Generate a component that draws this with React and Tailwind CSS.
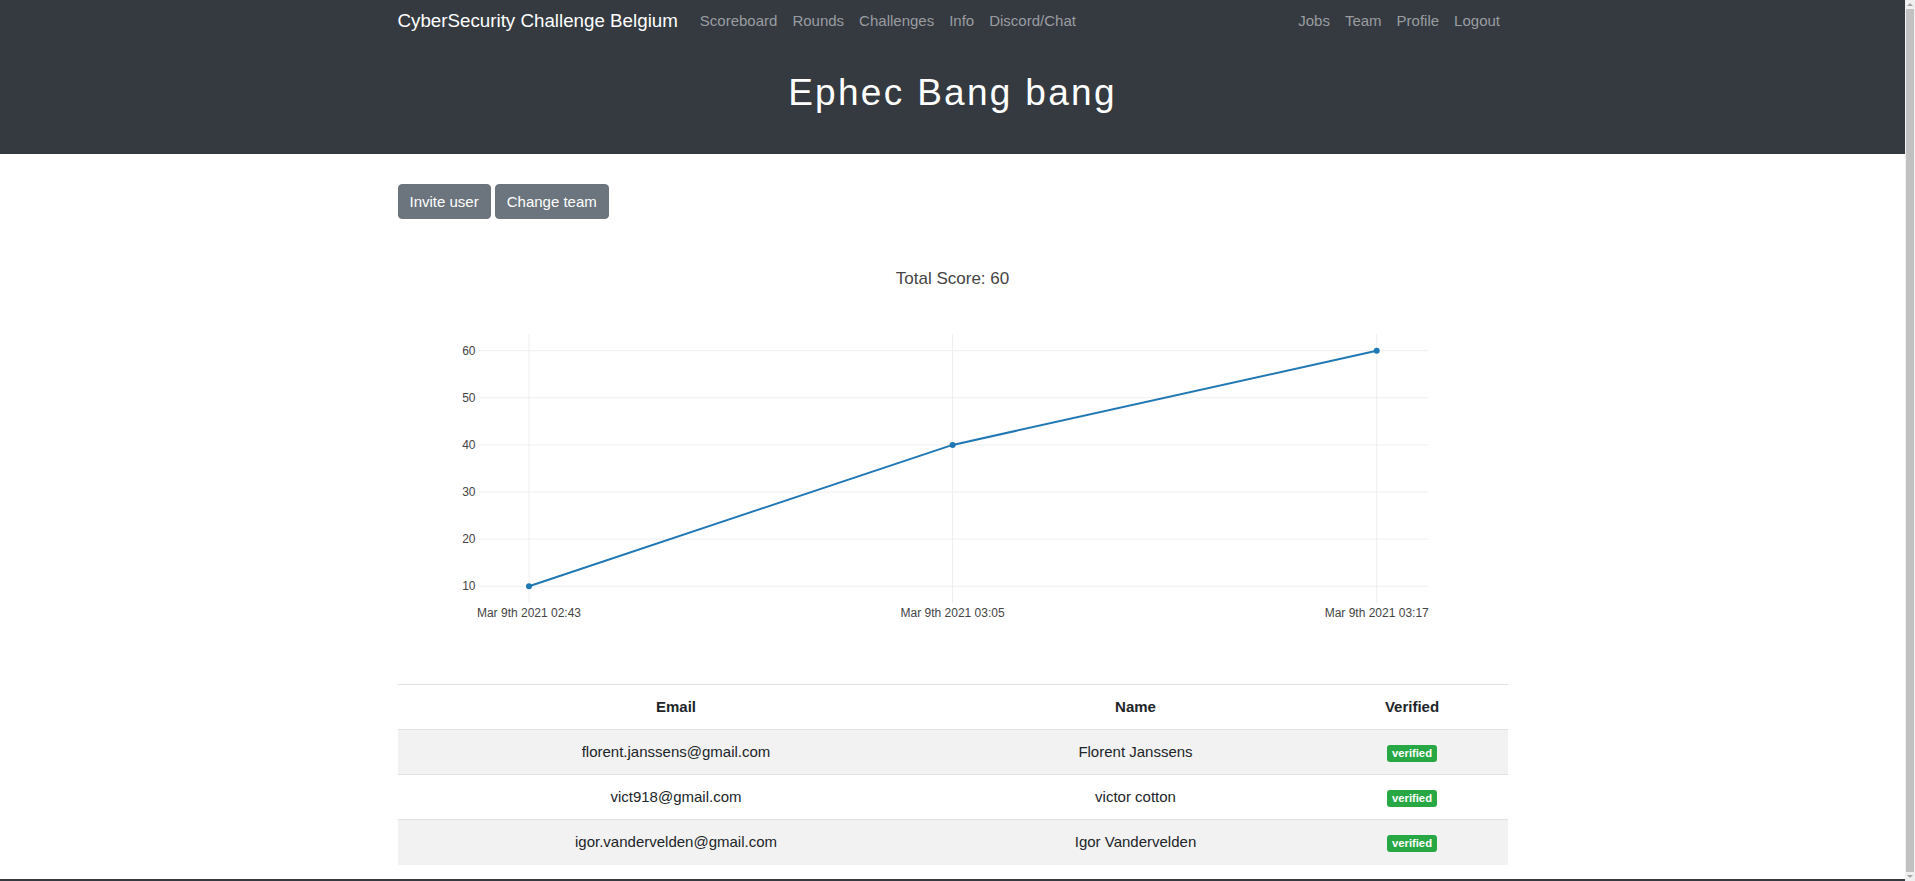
import React from 'react';

const leftLinks = ['Scoreboard', 'Rounds', 'Challenges', 'Info', 'Discord/Chat'];
const rightLinks = ['Jobs', 'Team', 'Profile', 'Logout'];

const members = [
  { email: 'florent.janssens@gmail.com', name: 'Florent Janssens' },
  { email: 'vict918@gmail.com', name: 'victor cotton' },
  { email: 'igor.vandervelden@gmail.com', name: 'Igor Vandervelden' },
];

// plot area inside the svg
const plot = { left: 81, right: 1030, top: 115, bottom: 384 };
const yOf = (v) => 131.7 + (60 - v) * 4.71;
const points = [
  { x: 131, v: 10, label: 'Mar 9th 2021 02:43' },
  { x: 554.6, v: 40, label: 'Mar 9th 2021 03:05' },
  { x: 978.7, v: 60, label: 'Mar 9th 2021 03:17' },
];

function ScoreChart() {
  return (
    <svg width="1110" height="420" className="block" style={{ fontFamily: '"Liberation Sans", Arial, sans-serif' }}>
      <text x="554.5" y="65" textAnchor="middle" fontSize="17" fill="#444">Total Score: 60</text>
      {[10, 20, 30, 40, 50, 60].map(v => (
        <g key={v}>
          <line x1={plot.left} x2={plot.right} y1={yOf(v)} y2={yOf(v)} stroke="#eee" strokeWidth="1" />
          <text x="77.5" y={yOf(v) + 4.2} textAnchor="end" fontSize="12" fill="#444">{v}</text>
        </g>
      ))}
      {points.map(p => (
        <g key={p.label}>
          <line x1={p.x} x2={p.x} y1={plot.top} y2={plot.bottom} stroke="#eee" strokeWidth="1" />
          <text x={p.x} y="398" textAnchor="middle" fontSize="12" fill="#444">{p.label}</text>
        </g>
      ))}
      <polyline
        points={points.map(p => `${p.x},${yOf(p.v)}`).join(' ')}
        fill="none"
        stroke="#1f77b4"
        strokeWidth="2"
      />
      {points.map(p => (
        <circle key={p.x} cx={p.x} cy={yOf(p.v)} r="3" fill="#1f77b4" />
      ))}
    </svg>
  );
}

function Scrollbar() {
  // the browser's classic scrollbar seen at the right edge
  return (
    <div className="fixed top-0 right-0 h-screen w-[10px] bg-[#f0f0f0] flex flex-col items-center">
      <svg width="10" height="9" className="block"><path d="M2 6 L5 3 L8 6 Z" fill="#a3a3a3" /></svg>
      <div className="flex-1 w-[8px] bg-[#c1c1c1]"></div>
      <svg width="10" height="9" className="block"><path d="M2 3 L5 6 L8 3 Z" fill="#a3a3a3" /></svg>
    </div>
  );
}

export default function App() {
  return (
    <div className="min-h-screen bg-white pr-[10px] font-['Liberation_Sans',Arial,sans-serif] text-[#212529]">
      <header className="bg-[#343a40]">
        <nav className="max-w-[1140px] mx-auto px-[15px] h-[42px] flex items-center">
          <a className="text-white text-[18.75px] mr-[14.5px] whitespace-nowrap">CyberSecurity Challenge Belgium</a>
          <ul className="flex">
            {leftLinks.map(l => (
              <li key={l}><a className="px-[7.5px] text-[15px] text-[#9a9da0]">{l}</a></li>
            ))}
          </ul>
          <ul className="flex ml-auto">
            {rightLinks.map(l => (
              <li key={l}><a className="px-[7.5px] text-[15px] text-[#9a9da0]">{l}</a></li>
            ))}
          </ul>
        </nav>
        <div className="pt-[29px] pb-[39px]">
          <h1 className="text-center text-white text-[37px] leading-[1.2] tracking-[2.3px]">Ephec Bang bang</h1>
        </div>
      </header>

      <main className="max-w-[1140px] mx-auto px-[15px]">
        <div className="pt-[30px] flex gap-[4px]">
          <button className="h-[35px] px-[11px] rounded-[4px] border border-[#6c757d] bg-[#6c757d] text-white text-[15px]">Invite user</button>
          <button className="h-[35px] px-[11px] rounded-[4px] border border-[#6c757d] bg-[#6c757d] text-white text-[15px]">Change team</button>
        </div>

        <ScoreChart />

        <table className="w-full mt-[45px] border-collapse text-[15px] text-center">
          <thead>
            <tr>
              <th className="w-[557px] h-[45px] border-t border-b border-[#dee2e6] font-bold">Email</th>
              <th className="w-[362px] h-[45px] border-t border-b border-[#dee2e6] font-bold">Name</th>
              <th className="h-[45px] border-t border-b border-[#dee2e6] font-bold">Verified</th>
            </tr>
          </thead>
          <tbody>
            {members.map((m, i) => (
              <tr key={m.email} className={i % 2 === 0 ? 'bg-[#f2f2f2]' : ''}>
                <td className="h-[45px] border-t border-[#dee2e6]">{m.email}</td>
                <td className="h-[45px] border-t border-[#dee2e6]">{m.name}</td>
                <td className="h-[45px] border-t border-[#dee2e6]">
                  <span className="inline-block bg-[#28a745] text-white text-[11.25px] font-bold leading-none px-[4.5px] py-[3px] rounded-[3px] align-middle">verified</span>
                </td>
              </tr>
            ))}
          </tbody>
        </table>
      </main>

      <footer className="mt-[14px] h-[60px] bg-[#343a40]"></footer>
      <Scrollbar />
    </div>
  );
}
